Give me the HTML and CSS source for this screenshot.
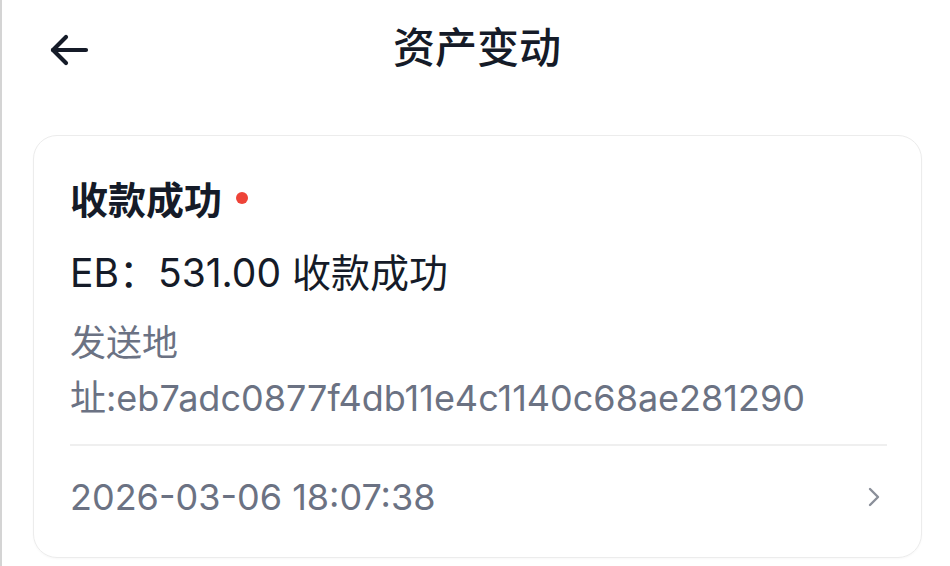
FILE: index.html
```html
<!DOCTYPE html>
<html lang="zh-CN">
<head>
<meta charset="utf-8">
<title>资产变动</title>
<link rel="stylesheet" href="styles.css">
</head>
<body>
<div class="page">
  <header class="topbar">
    <button class="back" aria-label="返回">
      <svg width="40" height="32" viewBox="0 0 40 32" fill="none" stroke="#151b28" stroke-width="4.2" stroke-linecap="round" stroke-linejoin="round">
        <path d="M37 16H4"/>
        <path d="M17 3L4 16L17 29"/>
      </svg>
    </button>
    <h1 class="title">资产变动</h1>
  </header>

  <section class="card">
    <div class="card-title">
      <span>收款成功</span>
      <span class="dot"></span>
    </div>
    <div class="amount">EB：531.00 收款成功</div>
    <div class="address">发送地址:eb7adc0877f4db11e4c1140c68ae281290</div>
    <div class="divider"></div>
    <div class="footer">
      <span class="time">2026-03-06 18:07:38</span>
      <svg class="chev" width="14" height="20" viewBox="0 0 14 20" fill="none" stroke="#8a8f99" stroke-width="2.4" stroke-linecap="round" stroke-linejoin="round">
        <path d="M3 2L11 10L3 18"/>
      </svg>
    </div>
  </section>
</div>
</body>
</html>
```

FILE: styles.css
```css
* {
  box-sizing: border-box;
}

html, body {
  margin: 0;
  padding: 0;
  background: #ffffff;
}

body {
  font-family: "Inter", "Noto Sans CJK SC", sans-serif;
  color: #151b28;
  border-left: 2px solid #d4d4d4;
  min-height: 566px;
}

.page {
  width: 948px;
}

.topbar {
  position: relative;
  height: 96px;
  display: flex;
  align-items: center;
  justify-content: center;
}

.back {
  position: absolute;
  left: 47px;
  top: 34px;
  padding: 0;
  border: 0;
  background: none;
  display: flex;
}

.title {
  margin: 0;
  font-size: 42px;
  font-weight: 500;
  line-height: 1;
  margin-left: 2px;
  color: #151b28;
}

.card {
  margin: 39px 0 0 31px;
  width: 889px;
  border: 1.5px solid #ececec;
  border-radius: 24px;
  padding: 42px 34px 38px 36px;
  box-shadow: 0 1px 2px rgba(0,0,0,0.03);
}

.card-title {
  display: flex;
  align-items: center;
  font-size: 38px;
  font-weight: 700;
  line-height: 44px;
  color: #151b28;
}

.dot {
  width: 12px;
  height: 12px;
  border-radius: 50%;
  background: #ee4338;
  margin-left: 14px;
  margin-top: -4px;
}

.amount {
  margin-top: 29px;
  font-size: 39px;
  line-height: 44px;
  color: #151b28;
}

.address {
  margin-top: 21px;
  font-size: 36px;
  line-height: 55px;
  color: #6b7283;
}

.divider {
  margin-top: 18px;
  height: 2px;
  background: #efefef;
}

.footer {
  margin-top: 29px;
  display: flex;
  align-items: center;
  justify-content: space-between;
  height: 44px;
}

.time {
  font-size: 36px;
  line-height: 44px;
  color: #6b7283;
}

.chev {
  margin-right: 6px;
}
```
